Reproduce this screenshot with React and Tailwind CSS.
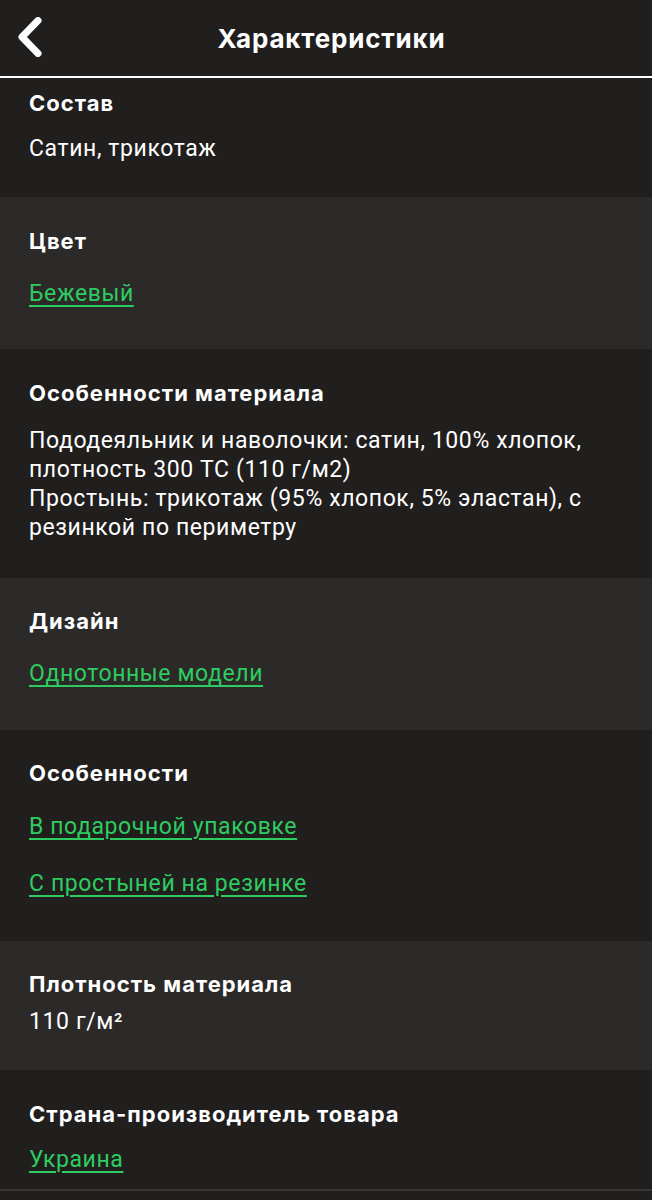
import React from 'react';

const sections = [
  { title: 'Состав', text: ['Сатин, трикотаж'], bg: 'dark', pad: 'pt-[12px] pb-[34.5px]', gap: 'mt-[17.5px]' },
  { title: 'Цвет', links: ['Бежевый'], bg: 'light', pad: 'pt-[31px] pb-[41.5px]', gap: 'mt-[24.5px]' },
  {
    title: 'Особенности материала',
    text: [
      'Пододеяльник и наволочки: сатин, 100% хлопок,',
      'плотность 300 TC (110 г/м2)',
      'Простынь: трикотаж (95% хлопок, 5% эластан), с',
      'резинкой по периметру',
    ],
    bg: 'dark',
    pad: 'pt-[31px] pb-[36.5px]',
    gap: 'mt-[19.5px]',
  },
  { title: 'Дизайн', links: ['Однотонные модели'], bg: 'light', pad: 'pt-[30px] pb-[42.5px]', gap: 'mt-[24.5px]' },
  { title: 'Особенности', links: ['В подарочной упаковке', 'С простыней на резинке'], bg: 'dark', pad: 'pt-[30px] pb-[43.5px]', gap: 'mt-[25.5px]' },
  { title: 'Плотность материала', text: ['110 г/м²'], bg: 'light', pad: 'pt-[30px] pb-[34.5px]', gap: 'mt-[9.5px]' },
  { title: 'Страна-производитель товара', links: ['Украина'], bg: 'dark', pad: 'pt-[31px] pb-[15.5px]', gap: 'mt-[17.5px]' },
];

const Section = ({ s }) => (
  <div className={`${s.bg === 'light' ? 'bg-[#2c2929]' : 'bg-[#211e1e]'} px-[29px] ${s.pad}`}>
    <div className="font-['Inter',sans-serif] text-[22px] font-bold leading-[26px] tracking-[1px] text-white whitespace-nowrap">
      {s.title}
    </div>
    {s.text && (
      <div className={`${s.gap} font-['Roboto',sans-serif] text-[23px] leading-[29px] tracking-[0.6px] text-white whitespace-nowrap`}>
        {s.text.map((t) => (
          <div key={t}>{t}</div>
        ))}
      </div>
    )}
    {s.links && (
      <div className={`${s.gap} flex flex-col gap-[28px] font-['Roboto',sans-serif] text-[23px] leading-[29px] tracking-[0.6px]`}>
        {s.links.map((l) => (
          <a key={l} href="#" className="self-start text-[#2ecc60] underline underline-offset-[4px] decoration-[2px]">
            {l}
          </a>
        ))}
      </div>
    )}
  </div>
);

export default function App() {
  return (
    <div className="w-[652px] h-[1200px] overflow-hidden bg-[#211e1e]">
      <header className="relative h-[78px] pl-[11px] flex items-center justify-center border-b-2 border-white">
        <button className="absolute left-[17px] top-[17px] w-[26px] h-[40px]">
          <svg width="26" height="40" viewBox="0 0 26 40" fill="none">
            <path d="M21 3.5 L5 20 L21 36.5" stroke="white" strokeWidth="7" strokeLinecap="round" strokeLinejoin="round" />
          </svg>
        </button>
        <h1 className="font-['Inter',sans-serif] text-[26px] font-bold tracking-[0.8px] text-white">Характеристики</h1>
      </header>
      {sections.map((s) => (
        <Section key={s.title} s={s} />
      ))}
      <div className="h-[2px] bg-[#3a3737]" />
    </div>
  );
}
